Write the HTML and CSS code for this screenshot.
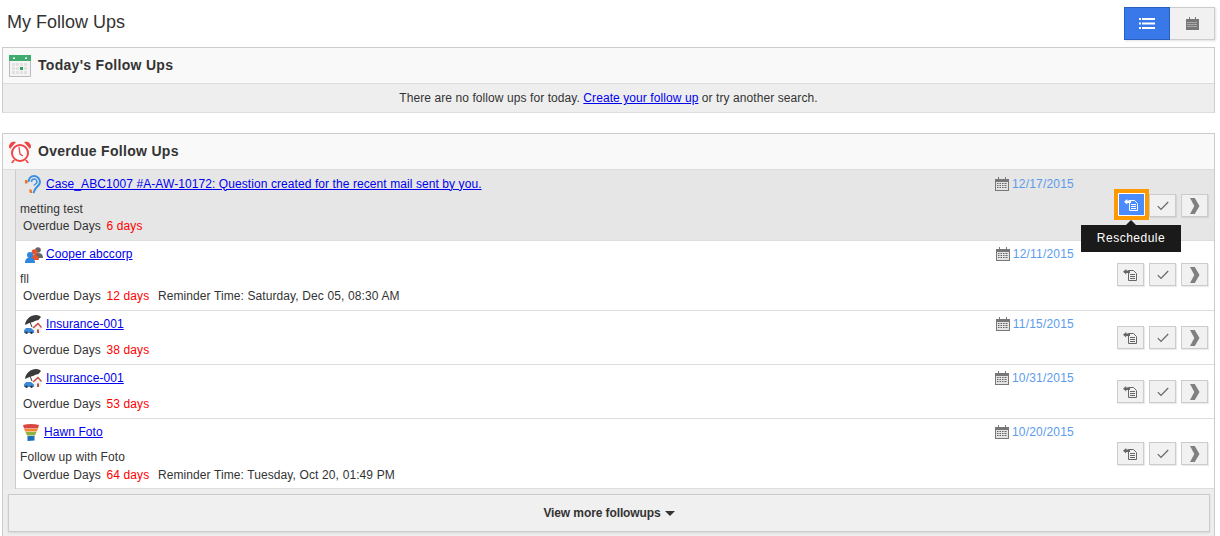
FILE: index.html
```html
<!DOCTYPE html>
<html lang="en">
<head>
<meta charset="utf-8">
<title>My Follow Ups</title>
<link rel="stylesheet" href="styles.css">
</head>
<body>
<svg class="defs" width="0" height="0" aria-hidden="true">
  <defs>
    <symbol id="cal" viewBox="0 0 14 14"><path fill="#777" d="M0 2h3V0h1v2h6V0h1v2h3v12H0z"/><path fill="#e4e4e4" d="M1 5h12v8H1z"/><path fill="#666" d="M2 6h1.500v1H2zM4.500 6H6v1H4.500zM7 6h1.500v1H7zM9.500 6H11v1H9.500zM11.500 6H12v1h-.5zM2 8h1.500v1H2zM4.500 8H6v1H4.500zM7 8h1.500v1H7zM9.500 8H11v1H9.500zM11.500 8H12v1h-.5zM2 10h1.500v1H2zM4.500 10H6v1H4.500zM7 10h1.500v1H7zM9.500 10H11v1H9.500zM11.500 10H12v1h-.5z"/></symbol>
    <symbol id="resch" viewBox="0 0 15 12"><path fill="none" stroke="currentColor" d="M5.500 1.500h5l3 3v7h-8zM7 5.500h5M7 7.500h5M7 9.500h5"/><path fill="currentColor" d="M0 2.700 3.200 0v1.500H7v2.400H3.200v1.500z"/></symbol>
    <symbol id="check" viewBox="0 0 12 10"><path fill="none" stroke="currentColor" stroke-width="1.200" d="M.8 5.200 4 8.500 11.200 1"/></symbol>
    <symbol id="chev" viewBox="0 0 10 16"><path fill="currentColor" d="M0 0h4.800L9.500 8l-4.700 8H0l4.300-8z"/></symbol>
    <symbol id="ear" viewBox="0 0 16 19"><path fill="none" stroke="#3d8fe0" stroke-width="2" d="M3.500 7C3.500 3.500 6 1 9 1s6 2.500 6 6c0 3.500-3.500 4.500-5 7.500-.7 1.500-1 2.500-1.500 3.500"/><path fill="none" stroke="#3d8fe0" stroke-width="1.500" d="M6.500 7C6.500 5 7.800 4 9 4s3 1 3 3c0 1.800-2.500 2.300-3 3.500"/><path fill="#e9742b" d="M0 5h2.500v3.500H0z"/><path fill="#e9742b" d="M4 14.500h2.500l1 3.500H5z"/></symbol>
    <symbol id="people" viewBox="0 0 18 16"><circle cx="13" cy="3" r="2.800" fill="#666"/><path fill="#666" d="M9 11c0-4 1.500-5 4-5s5 1 5 5z"/><circle cx="9.500" cy="5" r="2.800" fill="#e8552d"/><path fill="#e8552d" d="M5 13c0-4 2-5 4.500-5s4.500 1 4.500 5z"/><circle cx="5" cy="8" r="3" fill="#2e86de"/><path fill="#2e86de" d="M0 16c0-4 2-5.500 5-5.500s5 1.500 5 5.500z"/></symbol>
    <symbol id="ins" viewBox="0 0 18 19"><path fill="#3a3a3a" d="M1 10C1.500 4 7 0 12 0c2 0 4 .8 5 2l-2.500 3-3 .7-2.500 1.300-3 .7z"/><path stroke="#3a3a3a" d="M6 7l2 5"/><path fill="#f2f2f2" d="M10 13l4-4 3 3v6h-7z"/><path fill="#c84a3e" d="M8.500 12.500 14 7.500l4 4.500-1 1-3-3.500-4.500 4z"/><path fill="#a8574c" d="M13 14.500h2V18h-2z"/><path fill="#3d8ad8" d="M0 15.500l2-2.500h5l3 2.500v2.500H0z"/><circle cx="2.500" cy="17.800" r="1.200" fill="#333"/><circle cx="7.500" cy="17.800" r="1.200" fill="#333"/></symbol>
    <symbol id="funnel" viewBox="0 0 16 17"><path fill="#d9463e" d="M0 1q8-2 16 0l-1 3.500H1z"/><path fill="#f0882e" d="M1.200 5h13.600l-.9 2.500H2.100z"/><path fill="#8cb33f" d="M2.500 8h11l-1.500 3.500H4z"/><path fill="#1f6fb8" d="M4.500 12h7v4.500l-7 .5z"/></symbol>
  </defs>
</svg>

<main class="page">
  <header class="top">
    <h1 class="title">My Follow Ups</h1>
    <div class="view-toggle">
      <button class="toggle active" aria-label="List view">
        <svg width="16" height="11" viewBox="0 0 16 11"><path fill="#fff" d="M0 0h2v2H0zM3 0h13v2H3zM0 4.500h2v2H0zM3 4.500h13v2H3zM0 9h2v2H0zM3 9h13v2H3z"/></svg>
      </button>
      <button class="toggle" aria-label="Calendar view">
        <svg width="13" height="13" viewBox="0 0 13 13"><path fill="#777" d="M0 2h3V0h1v2h5V0h1v2h3v11H0z"/><path fill="#ddd" d="M1.500 5h1v1h-1zM3.500 5h1v1h-1zM5.500 5h1v1h-1zM7.500 5h1v1h-1zM9.500 5h1v1h-1zM1.500 7h1v1h-1zM3.500 7h1v1h-1zM5.500 7h1v1h-1zM7.500 7h1v1h-1zM9.500 7h1v1h-1zM1.500 9h1v1h-1zM3.500 9h1v1h-1zM5.500 9h1v1h-1zM7.500 9h1v1h-1zM9.500 9h1v1h-1z"/></svg>
      </button>
    </div>
  </header>

  <section class="panel today">
    <div class="panel-head">
      <svg class="head-icon" width="22" height="22" viewBox="0 0 22 22"><path fill="#f4f4f4" stroke="#bbb" d="M.5.500h21v21H.500z"/><path fill="#3fab6e" d="M0 0h22v6H0z"/><path fill="#fff" d="M4 2.500h2v1.500H4zM16 2.500h2v1.500h-2z"/><path fill="#e2e2e2" d="M3 8h3v3H3zM7 8h3v3H7zM11 8h3v3h-3zM15 8h3v3h-3zM3 12h3v3H3zM7 12h3v3H7zM15 12h3v3h-3zM3 16h3v3H3zM7 16h3v3H7zM11 16h3v3h-3zM15 16h3v3h-3z"/><path fill="#2ea35f" d="M11 12h3v3h-3z"/></svg>
      <h2>Today's Follow Ups</h2>
    </div>
    <p class="empty">There are no follow ups for today. <a href="#">Create your follow up</a> or try another search.</p>
  </section>

  <section class="panel overdue">
    <div class="panel-head">
      <svg class="head-icon" width="22" height="22" viewBox="0 0 22 22"><circle cx="11" cy="12" r="8" fill="#fff" stroke="#f04545" stroke-width="2"/><path fill="#f04545" d="M0 6C0 2 3 0 7 1L1 8zM22 6c0-4-3-6-7-5l6 7zM4 19l2 0-2 3H2zM18 19h-2l2 3h2z"/><path fill="none" stroke="#f04545" stroke-width="1.300" d="M10 6l1 7 3 2"/></svg>
      <h2>Overdue Follow Ups</h2>
    </div>

    <article class="row current">
      <div class="main">
        <div class="subject"><svg class="ico ico-ear" width="16" height="19"><use href="#ear"/></svg><a href="#">Case_ABC1007 #A-AW-10172: Question created for the recent mail sent by you.</a></div>
        <p class="note">metting test</p>
        <p class="meta">Overdue Days <em>6 days</em></p>
      </div>
      <div class="date"><svg width="14" height="14"><use href="#cal"/></svg><span>12/17/2015</span></div>
      <div class="actions">
        <button class="act hot" aria-label="Reschedule"><svg width="15" height="12"><use href="#resch"/></svg><span class="tip">Reschedule</span></button>
        <button class="act" aria-label="Done"><svg width="12" height="10"><use href="#check"/></svg></button>
        <button class="act" aria-label="Open"><svg class="chev" width="10" height="16"><use href="#chev"/></svg></button>
      </div>
    </article>

    <article class="row">
      <div class="main">
        <div class="subject"><svg class="ico ico-people" width="18" height="16"><use href="#people"/></svg><a href="#">Cooper abccorp</a></div>
        <p class="note">fll</p>
        <p class="meta">Overdue Days <em>12 days</em> Reminder Time: Saturday, Dec 05, 08:30 AM</p>
      </div>
      <div class="date"><svg width="14" height="14"><use href="#cal"/></svg><span>12/11/2015</span></div>
      <div class="actions raised">
        <button class="act" aria-label="Reschedule"><svg width="15" height="12"><use href="#resch"/></svg></button>
        <button class="act" aria-label="Done"><svg width="12" height="10"><use href="#check"/></svg></button>
        <button class="act" aria-label="Open"><svg class="chev" width="10" height="16"><use href="#chev"/></svg></button>
      </div>
    </article>

    <article class="row">
      <div class="main">
        <div class="subject"><svg class="ico ico-ins" width="18" height="19"><use href="#ins"/></svg><a href="#">Insurance-001</a></div>
        <p class="meta">Overdue Days <em>38 days</em></p>
      </div>
      <div class="date"><svg width="14" height="14"><use href="#cal"/></svg><span>11/15/2015</span></div>
      <div class="actions">
        <button class="act" aria-label="Reschedule"><svg width="15" height="12"><use href="#resch"/></svg></button>
        <button class="act" aria-label="Done"><svg width="12" height="10"><use href="#check"/></svg></button>
        <button class="act" aria-label="Open"><svg class="chev" width="10" height="16"><use href="#chev"/></svg></button>
      </div>
    </article>

    <article class="row">
      <div class="main">
        <div class="subject"><svg class="ico ico-ins" width="18" height="19"><use href="#ins"/></svg><a href="#">Insurance-001</a></div>
        <p class="meta">Overdue Days <em>53 days</em></p>
      </div>
      <div class="date"><svg width="14" height="14"><use href="#cal"/></svg><span>10/31/2015</span></div>
      <div class="actions">
        <button class="act" aria-label="Reschedule"><svg width="15" height="12"><use href="#resch"/></svg></button>
        <button class="act" aria-label="Done"><svg width="12" height="10"><use href="#check"/></svg></button>
        <button class="act" aria-label="Open"><svg class="chev" width="10" height="16"><use href="#chev"/></svg></button>
      </div>
    </article>

    <article class="row">
      <div class="main">
        <div class="subject"><svg class="ico ico-funnel" width="16" height="17"><use href="#funnel"/></svg><a href="#">Hawn Foto</a></div>
        <p class="note">Follow up with Foto</p>
        <p class="meta low">Overdue Days <em>64 days</em> Reminder Time: Tuesday, Oct 20, 01:49 PM</p>
      </div>
      <div class="date"><svg width="14" height="14"><use href="#cal"/></svg><span>10/20/2015</span></div>
      <div class="actions">
        <button class="act" aria-label="Reschedule"><svg width="15" height="12"><use href="#resch"/></svg></button>
        <button class="act" aria-label="Done"><svg width="12" height="10"><use href="#check"/></svg></button>
        <button class="act" aria-label="Open"><svg class="chev" width="10" height="16"><use href="#chev"/></svg></button>
      </div>
    </article>

    <div class="more-wrap">
      <button class="more">View more followups<span class="caret"></span></button>
    </div>
  </section>
</main>
</body>
</html>
```

FILE: styles.css
```css
* { box-sizing: border-box; }
html, body { margin: 0; height: 536px; overflow: hidden; background: #fff; }
body { font: 12px/17px "Liberation Sans", Arial, sans-serif; letter-spacing: .08px; color: #333; }
.defs { display: block; height: 0; }
.page { padding: 0 5px 0 2px; }
p, h1, h2 { margin: 0; }

.top { display: flex; justify-content: space-between; height: 47px; padding: 7px 0 0 5px; }
.title { font-size: 18px; line-height: 30px; font-weight: 400; letter-spacing: 0; color: #333; }
.view-toggle { display: flex; height: 33px; box-shadow: 1px 1px 2px rgba(0,0,0,.12); }
.toggle { width: 45px; height: 33px; padding: 0; background: #f1f1f1; border: 1px solid #ccc; border-left: 0; display: flex; align-items: center; justify-content: center; }
.toggle.active { width: 46px; background: #3878e8; border: 1px solid #2a5fbf; }

.panel { border: 1px solid #ccc; border-bottom-color: #ddd; background: #fff; }
.today { height: 66px; margin-bottom: 20px; background: #eee; }
.panel-head { display: flex; align-items: center; height: 36px; padding: 0 0 2px 6px; background: #f9f9f9; border-bottom: 1px solid #ddd; }
.head-icon { flex: none; margin: 2px 7px 0 0; }
.panel-head h2 { font-size: 14px; line-height: 20px; font-weight: 700; letter-spacing: .3px; color: #333; }
.empty { text-align: center; line-height: 29px; }
a { color: #00e; }

.row { display: flex; align-items: center; position: relative; padding-left: 12px; border-bottom: 1px solid #ddd; background: #fff; }
.row::before { content: ""; position: absolute; left: 0; top: 0; bottom: -1px; width: 12px; background: #ebebeb; border-right: 1px solid #ccc; }
.row.current { background: #e6e6e6; z-index: 2; padding-top: 1px; }
.main { flex: 1; min-width: 0; padding: 0 0 5px 5px; }
.subject { display: flex; align-items: center; height: 26px; margin-bottom: 4px; padding-left: 3px; }
.subject + .meta { margin-top: 5px; }
.ico { flex: none; }
.ico-ear { margin: 0 5px 0 2px; }
.ico-people { margin: 2px 3px 0 2px; }
.ico-ins { margin: 0 4px 0 1px; }
.ico-funnel { margin: 0 5px 0 0; }
.note { line-height: 17px; }
.meta { padding-left: 3px; line-height: 17px; word-spacing: .2px; }
.meta.low { margin: 1px 0 -1px; }
.meta em { font-style: normal; color: #f00; margin: 0 5px 0 2px; }

.date { align-self: flex-start; display: flex; align-items: center; gap: 3px; height: 26px; margin-right: 43px; letter-spacing: .2px; color: #5b9bec; }
.actions { display: flex; gap: 5px; margin-right: 6px; }
.actions.raised { margin-top: -2px; }
.act { position: relative; width: 27px; height: 23px; padding: 0; background: #f1f1f1; border: 1px solid #ccc; color: #666; display: flex; align-items: center; justify-content: center; box-shadow: 1px 1px 1px rgba(0,0,0,.08); }
.act .chev { color: #808080; }
.act.hot { background: #4a8cff; color: #fff; border-color: #fff; outline: 4px solid #f90; transform: translate(1px, -1px); }
.tip { position: absolute; left: -38px; top: 31px; width: 100px; height: 27px; background: #1a1a1a; color: #fff; font: 12px/27px "Liberation Sans", Arial, sans-serif; text-align: center; letter-spacing: .5px; z-index: 2; }
.tip::before { content: ""; position: absolute; left: 45px; top: -5px; border: 5px solid transparent; border-top: 0; border-bottom-color: #1a1a1a; }

.more-wrap { padding: 5px 4px 0 5px; height: 60px; background: #eee; }
.more { display: block; width: 100%; height: 38px; background: #f0f0f0; border: 1px solid #ccc; font: 700 12px "Liberation Sans", Arial, sans-serif; letter-spacing: -.1px; color: #333; box-shadow: 0 1px 2px rgba(0,0,0,.1); }
.caret { display: inline-block; margin-left: 4px; vertical-align: middle; border: 5px solid transparent; border-bottom: 0; border-top-color: #333; }
```
